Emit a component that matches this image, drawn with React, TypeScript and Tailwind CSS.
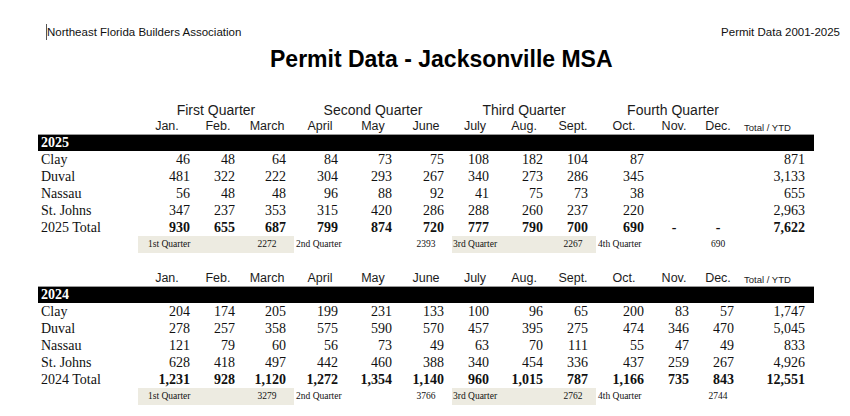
import React from 'react';

const cols =
  'grid grid-cols-[100px_58px_44px_54px_52px_54px_52px_46px_52px_46px_56px_44px_44px_74px]';

// right padding for each numeric column so the figures line up like the sheet
const numPad = [
  'pr-[6px]', 'pr-[5px]', 'pr-[8px]',
  'pr-[8px]', 'pr-[8px]', 'pr-[8px]',
  'pr-[9px]', 'pr-[7px]', 'pr-[8px]',
  'pr-[8px]', 'pr-[7px]', 'pr-[6px]',
  'pr-[9px]',
];

const months = ['Jan.', 'Feb.', 'March', 'April', 'May', 'June', 'July', 'Aug.', 'Sept.', 'Oct.', 'Nov.', 'Dec.'];

type Row = { name: string; values: string[]; bold?: boolean };

const data2025: Row[] = [
  { name: 'Clay', values: ['46', '48', '64', '84', '73', '75', '108', '182', '104', '87', '', '', '871'] },
  { name: 'Duval', values: ['481', '322', '222', '304', '293', '267', '340', '273', '286', '345', '', '', '3,133'] },
  { name: 'Nassau', values: ['56', '48', '48', '96', '88', '92', '41', '75', '73', '38', '', '', '655'] },
  { name: 'St. Johns', values: ['347', '237', '353', '315', '420', '286', '288', '260', '237', '220', '', '', '2,963'] },
  { name: '2025 Total', bold: true, values: ['930', '655', '687', '799', '874', '720', '777', '790', '700', '690', '-', '-', '7,622'] },
];

const data2024: Row[] = [
  { name: 'Clay', values: ['204', '174', '205', '199', '231', '133', '100', '96', '65', '200', '83', '57', '1,747'] },
  { name: 'Duval', values: ['278', '257', '358', '575', '590', '570', '457', '395', '275', '474', '346', '470', '5,045'] },
  { name: 'Nassau', values: ['121', '79', '60', '56', '73', '49', '63', '70', '111', '55', '47', '49', '833'] },
  { name: 'St. Johns', values: ['628', '418', '497', '442', '460', '388', '340', '454', '336', '437', '259', '267', '4,926'] },
  { name: '2024 Total', bold: true, values: ['1,231', '928', '1,120', '1,272', '1,354', '1,140', '960', '1,015', '787', '1,166', '735', '843', '12,551'] },
];

const quarterLabels = ['1st Quarter', '2nd Quarter', '3rd Quarter', '4th Quarter'];
const quarterPad = ['pl-[10px]', 'pl-[2px]', 'pl-[1px]', 'pl-[2px]'];

function MonthHeader() {
  return (
    <div className={`${cols} h-[16px] items-end text-[12.5px] leading-[15px] text-[#1c1c1c]`}>
      <div />
      {months.map((m) => (
        <div key={m} className="text-center">{m}</div>
      ))}
      <div className="pl-[4px] text-[9.5px] leading-[13px]">Total / YTD</div>
    </div>
  );
}

function YearBlock({ year, rows, quarters }: { year: string; rows: Row[]; quarters: string[] }) {
  return (
    <div className="font-['Liberation_Serif',serif] text-[#111]">
      <div className="h-[17px] bg-black border-t border-[#999] pl-[3px] text-[14px] font-bold leading-[16px] text-white">
        {year}
      </div>
      {rows.map((r) => (
        <div key={r.name} className={`${cols} h-[17px] text-[14px] leading-[17px] ${r.bold ? 'font-bold' : ''}`}>
          <div className="pl-[3px] font-normal">{r.name}</div>
          {r.values.map((v, i) => (
            <div key={i} className={v === '-' ? 'text-center' : `text-right ${numPad[i]}`}>
              {v}
            </div>
          ))}
        </div>
      ))}
      <div className={`${cols} h-[17px] text-[9.5px] leading-[17px]`}>
        <div />
        {quarters.map((q, i) => (
          <div key={i} className={`col-span-3 grid grid-cols-subgrid ${i % 2 === 0 ? 'bg-[#edebe1]' : ''}`}>
            <div className={`col-span-2 ${quarterPad[i]}`}>{quarterLabels[i]}</div>
            <div className="text-center">{q}</div>
          </div>
        ))}
      </div>
    </div>
  );
}

export default function App() {
  return (
    <div className="h-[416px] w-[850px] overflow-hidden bg-white font-['Liberation_Sans',Arial,sans-serif] text-[#111]">
      <div className="flex justify-between pl-[46px] pr-[10px] pt-[24px] text-[11.5px] leading-[16px]">
        <span className="border-l border-[#555] pl-[0px]">Northeast Florida Builders Association</span>
        <span>Permit Data 2001-2025</span>
      </div>
      <h1 className="mt-[5px] pl-[270px] text-[23px] font-bold leading-[28px] text-black">
        Permit Data - Jacksonville MSA
      </h1>

      <div className="ml-[38px] mt-[29px] w-[776px]">
        <div className={`${cols} h-[16px] text-[14px] leading-[16px] text-[#1c1c1c]`}>
          <div />
          <div className="col-span-3 text-center">First Quarter</div>
          <div className="col-span-3 text-center">Second Quarter</div>
          <div className="col-span-3 text-center">Third Quarter</div>
          <div className="col-span-3 pl-[10px] text-center">Fourth Quarter</div>
        </div>
        <MonthHeader />
        <YearBlock year="2025" rows={data2025} quarters={['2272', '2393', '2267', '690']} />

        <div className="mt-[17px]">
          <MonthHeader />
        </div>
        <YearBlock year="2024" rows={data2024} quarters={['3279', '3766', '2762', '2744']} />
      </div>
    </div>
  );
}
